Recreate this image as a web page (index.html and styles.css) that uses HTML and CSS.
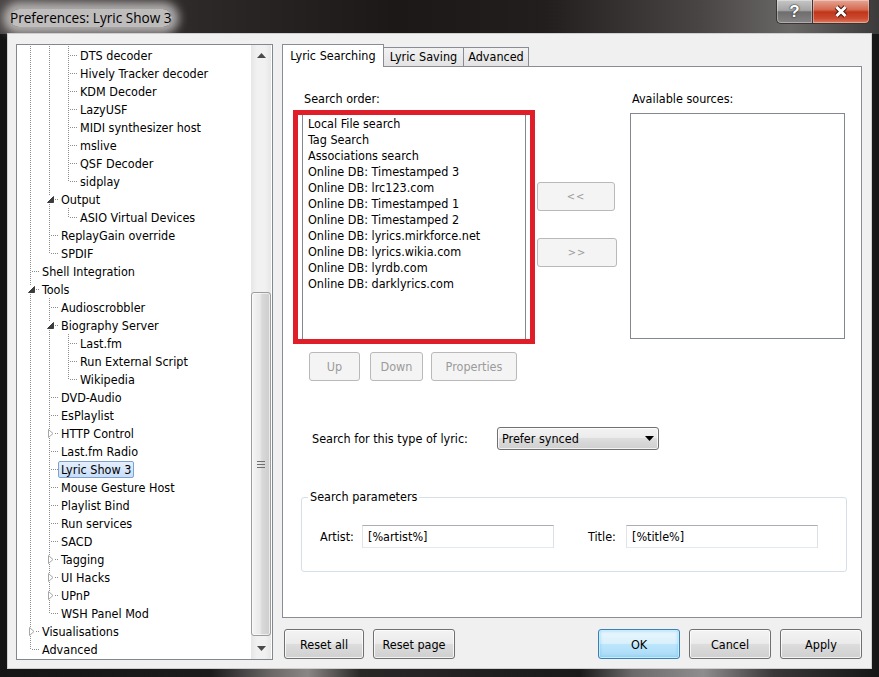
FILE: index.html
```html
<!DOCTYPE html>
<html>
<head>
<meta charset="utf-8">
<title>Preferences: Lyric Show 3</title>
<link rel="stylesheet" href="styles.css">
</head>
<body>
<div class="window">
  <div class="titlebar">
    <span class="title">Preferences: Lyric Show 3</span>
    <div class="capbtns">
      <div class="capbtn help"><span>?</span></div>
      <div class="capbtn close">
        <svg width="16" height="13" viewBox="0 0 16 13"><path d="M3.5 2 L12.5 11 M12.5 2 L3.5 11" stroke="#4a1a10" stroke-width="5"/><path d="M3.5 2 L12.5 11 M12.5 2 L3.5 11" stroke="#fff" stroke-width="3"/></svg>
      </div>
    </div>
  </div>
  <div class="client">
    <div class="tree">
      <div class="rows">
        <div class="row"><span class="g v"></span><span class="g v"></span><span class="g t"></span><span class="n">DTS decoder</span></div>
        <div class="row"><span class="g v"></span><span class="g v"></span><span class="g t"></span><span class="n">Hively Tracker decoder</span></div>
        <div class="row"><span class="g v"></span><span class="g v"></span><span class="g t"></span><span class="n">KDM Decoder</span></div>
        <div class="row"><span class="g v"></span><span class="g v"></span><span class="g t"></span><span class="n">LazyUSF</span></div>
        <div class="row"><span class="g v"></span><span class="g v"></span><span class="g t"></span><span class="n">MIDI synthesizer host</span></div>
        <div class="row"><span class="g v"></span><span class="g v"></span><span class="g t"></span><span class="n">mslive</span></div>
        <div class="row"><span class="g v"></span><span class="g v"></span><span class="g t"></span><span class="n">QSF Decoder</span></div>
        <div class="row"><span class="g v"></span><span class="g v"></span><span class="g l"></span><span class="n">sidplay</span></div>
        <div class="row"><span class="g v"></span><span class="g t"><svg class="exp" width="7" height="7" viewBox="0 0 7 7"><path d="M6.5 0.5 L6.5 6.5 L0.5 6.5 Z" fill="#3c3c3c" stroke="#3c3c3c" stroke-width="1"/></svg></span><span class="n">Output</span></div>
        <div class="row"><span class="g v"></span><span class="g v"></span><span class="g l"></span><span class="n">ASIO Virtual Devices</span></div>
        <div class="row"><span class="g v"></span><span class="g t"></span><span class="n">ReplayGain override</span></div>
        <div class="row"><span class="g v"></span><span class="g l"></span><span class="n">SPDIF</span></div>
        <div class="row"><span class="g t"></span><span class="n">Shell Integration</span></div>
        <div class="row"><span class="g t"><svg class="exp" width="7" height="7" viewBox="0 0 7 7"><path d="M6.5 0.5 L6.5 6.5 L0.5 6.5 Z" fill="#3c3c3c" stroke="#3c3c3c" stroke-width="1"/></svg></span><span class="n">Tools</span></div>
        <div class="row"><span class="g v"></span><span class="g t"></span><span class="n">Audioscrobbler</span></div>
        <div class="row"><span class="g v"></span><span class="g t"><svg class="exp" width="7" height="7" viewBox="0 0 7 7"><path d="M6.5 0.5 L6.5 6.5 L0.5 6.5 Z" fill="#3c3c3c" stroke="#3c3c3c" stroke-width="1"/></svg></span><span class="n">Biography Server</span></div>
        <div class="row"><span class="g v"></span><span class="g v"></span><span class="g t"></span><span class="n">Last.fm</span></div>
        <div class="row"><span class="g v"></span><span class="g v"></span><span class="g t"></span><span class="n">Run External Script</span></div>
        <div class="row"><span class="g v"></span><span class="g v"></span><span class="g l"></span><span class="n">Wikipedia</span></div>
        <div class="row"><span class="g v"></span><span class="g t"></span><span class="n">DVD-Audio</span></div>
        <div class="row"><span class="g v"></span><span class="g t"></span><span class="n">EsPlaylist</span></div>
        <div class="row"><span class="g v"></span><span class="g t"><svg class="col" width="6" height="9" viewBox="0 0 6 9"><path d="M0.5 0.5 L5 4.5 L0.5 8.5 Z" fill="#fff" stroke="#a6a6a6" stroke-width="1"/></svg></span><span class="n">HTTP Control</span></div>
        <div class="row"><span class="g v"></span><span class="g t"></span><span class="n">Last.fm Radio</span></div>
        <div class="row"><span class="g v"></span><span class="g t"></span><span class="n sel">Lyric Show 3</span></div>
        <div class="row"><span class="g v"></span><span class="g t"></span><span class="n">Mouse Gesture Host</span></div>
        <div class="row"><span class="g v"></span><span class="g t"></span><span class="n">Playlist Bind</span></div>
        <div class="row"><span class="g v"></span><span class="g t"></span><span class="n">Run services</span></div>
        <div class="row"><span class="g v"></span><span class="g t"></span><span class="n">SACD</span></div>
        <div class="row"><span class="g v"></span><span class="g t"><svg class="col" width="6" height="9" viewBox="0 0 6 9"><path d="M0.5 0.5 L5 4.5 L0.5 8.5 Z" fill="#fff" stroke="#a6a6a6" stroke-width="1"/></svg></span><span class="n">Tagging</span></div>
        <div class="row"><span class="g v"></span><span class="g t"><svg class="col" width="6" height="9" viewBox="0 0 6 9"><path d="M0.5 0.5 L5 4.5 L0.5 8.5 Z" fill="#fff" stroke="#a6a6a6" stroke-width="1"/></svg></span><span class="n">UI Hacks</span></div>
        <div class="row"><span class="g v"></span><span class="g t"><svg class="col" width="6" height="9" viewBox="0 0 6 9"><path d="M0.5 0.5 L5 4.5 L0.5 8.5 Z" fill="#fff" stroke="#a6a6a6" stroke-width="1"/></svg></span><span class="n">UPnP</span></div>
        <div class="row"><span class="g v"></span><span class="g l"></span><span class="n">WSH Panel Mod</span></div>
        <div class="row"><span class="g t"><svg class="col" width="6" height="9" viewBox="0 0 6 9"><path d="M0.5 0.5 L5 4.5 L0.5 8.5 Z" fill="#fff" stroke="#a6a6a6" stroke-width="1"/></svg></span><span class="n">Visualisations</span></div>
        <div class="row"><span class="g l"></span><span class="n">Advanced</span></div>
      </div>
      <div class="vscroll">
        <div class="sb-btn"><svg width="9" height="5" viewBox="0 0 9 5"><path d="M4.5 0 L9 5 L0 5 Z" fill="#4a4a4a"/></svg></div>
        <div class="sb-track">
          <div class="thumb"><svg width="8" height="7" viewBox="0 0 8 7"><path d="M0 0.5 H8 M0 3.5 H8 M0 6.5 H8" stroke="#6f6f6f" stroke-width="1"/></svg></div>
        </div>
        <div class="sb-btn"><svg width="9" height="5" viewBox="0 0 9 5"><path d="M0 0 L9 0 L4.5 5 Z" fill="#4a4a4a"/></svg></div>
      </div>
    </div>
    <div class="right">
      <div class="tabs">
        <div class="tab active">Lyric Searching</div>
        <div class="tab saving">Lyric Saving</div>
        <div class="tab adv">Advanced</div>
      </div>
      <div class="page">
        <div class="lists">
          <div class="col-order">
            <div class="cap-label">Search order:</div>
            <div class="order-box">
              <div class="listbox order">
                <div class="item">Local File search</div>
                <div class="item">Tag Search</div>
                <div class="item">Associations search</div>
                <div class="item">Online DB: Timestamped 3</div>
                <div class="item">Online DB: lrc123.com</div>
                <div class="item">Online DB: Timestamped 1</div>
                <div class="item">Online DB: Timestamped 2</div>
                <div class="item">Online DB: lyrics.mirkforce.net</div>
                <div class="item">Online DB: lyrics.wikia.com</div>
                <div class="item">Online DB: lyrdb.com</div>
                <div class="item">Online DB: darklyrics.com</div>
              </div>
            </div>
            <div class="order-btns">
              <button class="btn dis b-up">Up</button>
              <button class="btn dis b-down">Down</button>
              <button class="btn dis b-props">Properties</button>
            </div>
          </div>
          <div class="mid">
            <button class="btn dis move">&lt;&lt;</button>
            <button class="btn dis move wide">&gt;&gt;</button>
          </div>
          <div class="col-avail">
            <div class="cap-label">Available sources:</div>
            <div class="listbox avail"></div>
          </div>
        </div>
        <div class="type-row">
          <span class="type-label">Search for this type of lyric:</span>
          <div class="combo"><span>Prefer synced</span><svg width="9" height="5" viewBox="0 0 9 5"><path d="M0 0 L9 0 L4.5 5 Z" fill="#000"/></svg></div>
        </div>
        <div class="group">
          <span class="group-title">Search parameters</span>
          <div class="param-row">
            <span class="plabel">Artist:</span>
            <div class="input">[%artist%]</div>
            <span class="plabel title-lbl">Title:</span>
            <div class="input">[%title%]</div>
          </div>
        </div>
      </div>
      <div class="actions">
        <button class="btn reset-all">Reset all</button>
        <button class="btn reset-page">Reset page</button>
        <span class="spacer"></span>
        <button class="btn ok">OK</button>
        <button class="btn cancel">Cancel</button>
        <button class="btn apply">Apply</button>
      </div>
    </div>
  </div>
</div>
</body>
</html>
```
FILE: styles.css
```css
* { box-sizing: border-box; }
html, body { margin: 0; padding: 0; }
body {
  background: #111;
  font-family: "DejaVu Sans Condensed", "DejaVu Sans", sans-serif;
  font-size: 12.5px;
  color: #000;
}

.window {
  width: 879px;
  height: 677px;
  padding: 0 8px 9px;
  display: flex;
  flex-direction: column;
  background: linear-gradient(90deg, #151515 0%, #1c1c1c 24%, #6d6969 31%, #8a8686 35%, #2a2727 41%, #1a1a1a 66%, #6c6a6a 72%, #8f8d8d 80%, #3a3838 88%, #161616 100%);
}

/* ---------- title bar ---------- */
.titlebar {
  height: 34px;
  margin: 0 -8px;
  padding: 0 10px 0 10px;
  display: flex;
  justify-content: space-between;
  align-items: flex-start;
  background: linear-gradient(90deg, #4b4646 0%, #2e2929 22%, #1c1818 45%, #221e1e 62%, #4a4646 80%, #6a6767 90%, #3c3a3a 100%);
}
.title {
  margin-top: 9px;
  line-height: 18px;
  font-family: "Open Sans", "Noto Sans", sans-serif;
  font-size: 13.6px;
  color: #000;
  background: rgba(205, 203, 203, 0.9);
  box-shadow: 0 0 10px 7px rgba(205, 203, 203, 0.8);
  border-radius: 12px;
}
.capbtns {
  display: flex;
  margin-right: -1px;
}
.capbtn {
  height: 24px;
  display: flex;
  align-items: center;
  justify-content: center;
  border: 1px solid #3a3434;
  border-top: none;
  box-shadow: inset 0 0 0 1px rgba(255, 255, 255, 0.35);
}
.help {
  width: 36px;
  border-radius: 0 0 0 5px;
  border-right: none;
  background: linear-gradient(#c7c6c6 0%, #a5a4a4 45%, #6f6d6d 52%, #858383 100%);
}
.help span {
  font-family: "Liberation Sans", sans-serif;
  font-weight: bold;
  font-size: 17px;
  color: #fff;
  text-shadow: 0 0 2px #222, 0 0 1px #222;
}
.close {
  width: 58px;
  border-radius: 0 0 5px 0;
  background: linear-gradient(#e6a595 0%, #d46a50 42%, #c1351a 52%, #cc4b30 80%, #de7a60 100%);
}

/* ---------- client ---------- */
.client {
  flex: 1;
  display: flex;
  gap: 9px;
  padding: 10px 9px 0 8px;
  background: #f0f0f0;
  box-shadow: 0 0 0 1px #cfcfcf;
}

/* ---------- tree ---------- */
.tree {
  width: 257px;
  height: 616px;
  flex: none;
  display: flex;
  border: 1px solid #828790;
  background: #fff;
}
.rows {
  flex: 1;
  overflow: hidden;
  padding: 1px 0 0 4px;
}
.row {
  height: 18px;
  display: flex;
  align-items: center;
}
.g {
  width: 19px;
  height: 18px;
  flex: none;
  display: flex;
  align-items: center;
}
.v {
  background: repeating-linear-gradient(to bottom, #8c8c8c 0 1px, transparent 1px 2px) 9px 0 / 1px 18px no-repeat;
}
.t {
  background:
    repeating-linear-gradient(to bottom, #8c8c8c 0 1px, transparent 1px 2px) 9px 0 / 1px 18px no-repeat,
    repeating-linear-gradient(to right, #8c8c8c 0 1px, transparent 1px 2px) 11px 9px / 8px 1px no-repeat;
}
.l {
  background:
    repeating-linear-gradient(to bottom, #8c8c8c 0 1px, transparent 1px 2px) 9px 0 / 1px 10px no-repeat,
    repeating-linear-gradient(to right, #8c8c8c 0 1px, transparent 1px 2px) 11px 9px / 8px 1px no-repeat;
}
.exp { margin-left: 7px; margin-top: 1px; background: #fff; }
.col { margin-left: 8px; background: #fff; }
.n {
  margin-left: -1px;
  padding: 0 2px;
  border: 1px solid transparent;
  line-height: 15px;
  white-space: nowrap;
}
.n.sel {
  border-color: #7da2ce;
  border-radius: 2px;
  background: linear-gradient(#e4effd, #c9def9);
}

.vscroll {
  width: 20px;
  flex: none;
  display: flex;
  flex-direction: column;
  margin-right: 1px;
  background: linear-gradient(90deg, #e6e6e6 0%, #f1f1f1 30%, #f1f1f1 70%, #e6e6e6 100%);
}
.sb-btn {
  height: 21px;
  display: flex;
  align-items: center;
  justify-content: center;
}
.sb-track {
  flex: 1;
  padding-top: 226px;
}
.thumb {
  height: 344px;
  border: 1px solid #9c9c9c;
  border-radius: 3px;
  background: linear-gradient(90deg, #f4f4f4 0%, #e9e9e9 45%, #d9d9d9 55%, #cdcdcd 100%);
  box-shadow: inset 0 0 0 1px rgba(255, 255, 255, 0.6);
  display: flex;
  align-items: center;
  justify-content: center;
}

/* ---------- right side ---------- */
.right {
  width: 580px;
  flex: none;
  display: flex;
  flex-direction: column;
}
.tabs {
  height: 23px;
  margin-bottom: -1px;
  display: flex;
  align-items: flex-end;
  position: relative;
  z-index: 1;
}
.tab {
  height: 19px;
  margin-bottom: 1px;
  border: 1px solid #898c95;
  border-bottom: none;
  background: linear-gradient(#f2f2f2, #e3e3e3);
  text-align: center;
  line-height: 18px;
  white-space: nowrap;
}
.tab + .tab { margin-left: -1px; }
.tab.active {
  width: 102px;
  height: 23px;
  margin-bottom: 0;
  background: #fff;
  line-height: 21px;
  position: relative;
  z-index: 2;
}
.tab.saving { width: 81px; }
.tab.adv { width: 66px; }

.page {
  height: 552px;
  border: 1px solid #898c95;
  background: #fff;
  padding: 24px 0 0 19px;
}
.lists { display: flex; }
.col-order { width: 224px; flex: none; }
.cap-label {
  height: 16px;
  line-height: 16px;
  padding-left: 2px;
  margin-bottom: 6px;
  white-space: nowrap;
}
.order-box { position: relative; }
.order-box::after {
  content: "";
  position: absolute;
  top: -3px;
  left: -9px;
  right: -9px;
  bottom: -4px;
  border: 5px solid #e01e2a;
  pointer-events: none;
}
.listbox {
  border: 1px solid #828790;
  background: #fff;
}
.listbox.order {
  height: 227px;
  padding: 2px 0 0 5px;
}
.item {
  line-height: 16px;
  white-space: nowrap;
}
.listbox.avail {
  width: 215px;
  height: 226px;
}
.order-btns {
  display: flex;
  margin-top: 12px;
  padding-left: 7px;
}
.mid {
  width: 80px;
  flex: none;
  margin-left: 11px;
  padding-top: 91px;
  display: flex;
  flex-direction: column;
  gap: 27px;
}
.col-avail {
  margin-left: 13px;
}

/* ---------- buttons ---------- */
.btn {
  font: inherit;
  color: #000;
  margin: 0;
  padding: 0;
  height: 30px;
  border: 1px solid #707070;
  border-radius: 3px;
  background: linear-gradient(#f3f3f3 0%, #ebebeb 48%, #dddddd 50%, #cfcfcf 100%);
  box-shadow: inset 0 0 0 1px rgba(255, 255, 255, 0.75);
  display: flex;
  align-items: center;
  justify-content: center;
  white-space: nowrap;
}
.btn.dis {
  height: 29px;
  color: #9b9b9b;
  border-color: #b9b9b9;
  background: #f4f4f4;
  box-shadow: none;
}
.b-up { width: 51px; margin-right: 10px; }
.b-down { width: 53px; margin-right: 8px; }
.b-props { width: 86px; }
.move { width: 78px; letter-spacing: 1px; font-size: 11px; }
.move.wide { width: 80px; }

.type-row {
  display: flex;
  align-items: center;
  margin-top: 46px;
  padding-left: 10px;
}
.type-label {
  width: 185px;
  flex: none;
  white-space: nowrap;
}
.combo {
  width: 162px;
  height: 23px;
  border: 1px solid #707070;
  border-radius: 3px;
  background: linear-gradient(#f3f3f3 0%, #ebebeb 48%, #dddddd 50%, #cfcfcf 100%);
  box-shadow: inset 0 0 0 1px rgba(255, 255, 255, 0.75);
  display: flex;
  align-items: center;
  justify-content: space-between;
  padding: 0 4px 0 4px;
}

.group {
  margin-top: 47px;
  margin-left: -1px;
  width: 546px;
  height: 75px;
  border: 1px solid #d5dfe5;
  border-radius: 3px;
  padding: 0 0 0 18px;
}
.group-title {
  display: block;
  width: max-content;
  height: 16px;
  line-height: 16px;
  margin: -9px 0 0 -12px;
  padding: 0 2px;
  background: #fff;
}
.param-row {
  display: flex;
  align-items: center;
  margin-top: 20px;
}
.plabel {
  width: 42px;
  flex: none;
}
.plabel.title-lbl {
  width: 38px;
  margin-left: 34px;
}
.input {
  width: 192px;
  height: 23px;
  flex: none;
  border: 1px solid;
  border-color: #abadb3 #dbdfe6 #e3e9ef #e2e3ea;
  padding-left: 5px;
  line-height: 21px;
  white-space: nowrap;
}

.actions {
  display: flex;
  margin-top: 11px;
}
.spacer { flex: 1; }
.reset-all { width: 80px; margin-left: 2px; }
.reset-page { width: 82px; margin-left: 9px; }
.ok {
  width: 82px;
  border-color: #3c7fb1;
  background: linear-gradient(#eaf6fd 0%, #d9f0fc 48%, #bee6fd 50%, #a7d9f5 100%);
  box-shadow: inset 0 0 0 1px #c6ecff, inset 0 0 3px 1px rgba(72, 190, 240, 0.5);
}
.cancel { width: 82px; margin-left: 9px; }
.apply { width: 82px; margin-left: 9px; }
```
